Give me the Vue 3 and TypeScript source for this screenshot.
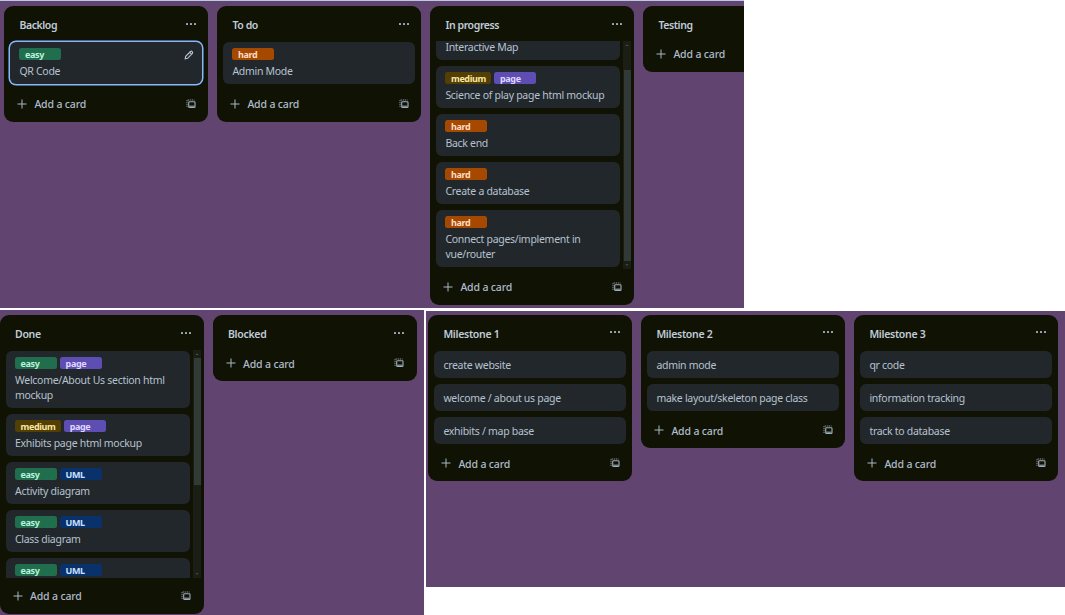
<script setup lang="ts">
type Tone = 'easy' | 'hard' | 'medium' | 'page' | 'UML'
interface Card { title: string; labels?: Tone[]; selected?: boolean }
interface List { name: string; cards: Card[]; scroll?: 'start' | 'end' }
interface Board { id: string; lists: List[] }

const boards: Board[] = [
  {
    id: 'progress',
    lists: [
      { name: 'Backlog', cards: [{ title: 'QR Code', labels: ['easy'], selected: true }] },
      { name: 'To do', cards: [{ title: 'Admin Mode', labels: ['hard'] }] },
      {
        name: 'In progress',
        scroll: 'end',
        cards: [
          { title: 'Interactive Map' },
          { title: 'Science of play page html mockup', labels: ['medium', 'page'] },
          { title: 'Back end', labels: ['hard'] },
          { title: 'Create a database', labels: ['hard'] },
          { title: 'Connect pages/implement in vue/router', labels: ['hard'] },
        ],
      },
      { name: 'Testing', cards: [] },
    ],
  },
  {
    id: 'finished',
    lists: [
      {
        name: 'Done',
        scroll: 'start',
        cards: [
          { title: 'Welcome/About Us section html mockup', labels: ['easy', 'page'] },
          { title: 'Exhibits page html mockup', labels: ['medium', 'page'] },
          { title: 'Activity diagram', labels: ['easy', 'UML'] },
          { title: 'Class diagram', labels: ['easy', 'UML'] },
          { title: '', labels: ['easy', 'UML'] },
        ],
      },
      { name: 'Blocked', cards: [] },
    ],
  },
  {
    id: 'milestones',
    lists: [
      { name: 'Milestone 1', cards: [{ title: 'create website' }, { title: 'welcome / about us page' }, { title: 'exhibits / map base' }] },
      { name: 'Milestone 2', cards: [{ title: 'admin mode' }, { title: 'make layout/skeleton page class' }] },
      { name: 'Milestone 3', cards: [{ title: 'qr code' }, { title: 'information tracking' }, { title: 'track to database' }] },
    ],
  },
]
</script>

<template>
  <main class="page">
    <section v-for="board in boards" :key="board.id" class="board" :class="board.id">
      <article v-for="list in board.lists" :key="list.name" class="list" :class="{ scrolling: list.scroll }">
        <header class="head">
          <h2>{{ list.name }}</h2>
          <svg class="dots" viewBox="0 0 10 4"><rect x="0" y="1" width="2" height="2" rx=".5" /><rect x="4" y="1" width="2" height="2" rx=".5" /><rect x="8" y="1" width="2" height="2" rx=".5" /></svg>
        </header>
        <div class="body">
          <div class="cards" :class="list.scroll">
            <div v-for="(card, i) in list.cards" :key="i" class="card" :class="{ selected: card.selected }">
              <div v-if="card.labels" class="labels">
                <span v-for="l in card.labels" :key="l" class="label" :class="`tone-${l}`">{{ l }}</span>
              </div>
              <p>{{ card.title }}</p>
              <svg v-if="card.selected" class="pencil" viewBox="0 0 10 10"><path d="M1.2 8.8 1.7 6.4 6.5 1.5Q7.4.8 8.2 1.6T8.4 3.4L3.6 8.3ZM5.8 2.4 7.5 4.1" /></svg>
            </div>
          </div>
          <div v-if="list.scroll" class="bar" :class="list.scroll">
            <svg viewBox="0 0 8 8"><path d="M2.3 5 4 3.4 5.7 5Z" /></svg>
            <i></i>
            <svg viewBox="0 0 8 8"><path d="M2.3 3.2 4 4.8 5.7 3.2Z" /></svg>
          </div>
        </div>
        <footer class="foot" :class="{ spaced: list.cards.length }">
          <svg class="plus" viewBox="0 0 10 10"><path d="M5 .5V9.5M.5 5H9.5" /></svg>
          <span>Add a card</span>
          <svg class="template" viewBox="0 0 10 10"><path class="dash" d="M1 8V1H8.5" /><rect x="2.7" y="2.8" width="6.3" height="5.7" rx=".8" /><path d="M3.2 7.2H8.5" /></svg>
        </footer>
      </article>
    </section>
  </main>
</template>

<style>
body { margin: 0; background: #fff; overflow: hidden; }
</style>

<style scoped>
.page {
  width: 1065px; height: 615px; overflow: hidden; background: #fff;
  display: grid; grid-template: 308px 307px / 426px 639px;
  font-family: "Noto Sans", "Open Sans", sans-serif; font-size: 10.5px; color: #b6c2cf;
}
.board { display: flex; gap: 9px; align-items: flex-start; background: #61446f; overflow: hidden; box-sizing: border-box; }
.progress { grid-column: 1 / 3; width: 744px; border-top: 1px solid #b9cbe0; padding: 5px 0 0 4.4px; }
.finished { width: 424px; margin-top: 2px; padding-top: 5px; }
.milestones { height: 276px; margin-top: 3px; padding: 3.5px 0 0 2.4px; }
.list { flex: 0 0 204px; display: flex; flex-direction: column; box-sizing: border-box; background: #101204; border-radius: 9px; }
.scrolling { height: 298.5px; }
.head { height: 34.5px; flex: none; display: flex; align-items: center; justify-content: space-between; padding: 4.5px 12.6px 0 15px; box-sizing: border-box; }
h2 { margin: 0; font-size: 10.5px; font-weight: 600; line-height: 15px; color: #c0ccd9; letter-spacing: -.4px; }
.finished h2, .milestones h2 { letter-spacing: -.3px; }
.dots { width: 10px; height: 4px; fill: #9fadbc; margin-bottom: 4px; }
.body { display: flex; min-height: 0; flex: none; }
.scrolling .body { flex: 1; margin-bottom: -1.5px; overflow: hidden; }
.cards { flex: 1; min-width: 0; display: flex; flex-direction: column; gap: 6px; padding: 1.5px 6px 0; }
.cards.start, .cards.end { padding-right: 3px; }
.cards.end { justify-content: flex-end; padding-bottom: 1.5px; }
.card { position: relative; flex: none; background: #22272b; border-radius: 6px; padding: 6.6px 9px 5.4px; min-height: 15px; }
.card:has(.labels) { padding: 6px 9px; }
.selected { box-shadow: 0 0 0 1.5px #85b8ff; }
.card p { margin: 0; line-height: 15px; letter-spacing: -.29px; }
.milestones .card { padding: 7px 9px 5px; }
.labels { display: flex; gap: 3px; margin-bottom: 3.6px; }
.labels + p { margin-bottom: -.6px; }
.label { box-sizing: border-box; min-width: 42px; height: 12px; border-radius: 2.5px; padding: 0 5.6px; font-size: 9px; line-height: 13.4px; font-weight: 700; letter-spacing: -.38px; }
.tone-easy { background: #216e4e; color: #baf3db; }
.tone-hard { background: #a54800; color: #fedec8; }
.tone-medium { background: #533f04; color: #f8e6a0; }
.tone-page { background: #5e4db2; color: #dfd8fd; }
.tone-UML { background: #09326c; color: #cce0ff; }
.pencil { position: absolute; right: 8.4px; top: 8px; width: 10px; height: 10px; fill: none; stroke: #b6c2cf; stroke-width: 1.15; }
.bar { width: 8px; margin-right: 3px; background: #1b1e14; display: flex; flex-direction: column; flex: none; }
.bar svg { width: 8px; height: 8px; fill: #4b534f; flex: none; }
.bar i { width: 7px; height: 127px; margin-left: 1px; background: #323a38; }
.bar.start i + svg { margin-top: auto; }
.bar.end i { height: 191px; margin-top: auto; }
.foot { height: 24px; flex: none; margin-bottom: 6px; padding: 0 12.6px 0 13px; display: flex; align-items: center; color: #aebbca; font-weight: 500; }
.spaced { margin-top: 7.5px; }
.plus { width: 10px; height: 10px; stroke: #a9b7c6; fill: none; margin-right: 7px; }
.foot span { flex: 1; line-height: 15px; letter-spacing: -.16px; padding-top: 1.2px; }
.milestones .foot span, .finished .foot:not(.spaced) span { padding-top: 2px; }
.template { width: 10px; height: 10px; stroke: #9fadbc; fill: none; stroke-width: 1.1; }
.template .dash { stroke-dasharray: 1.3 .7; stroke-width: .8; }
</style>
